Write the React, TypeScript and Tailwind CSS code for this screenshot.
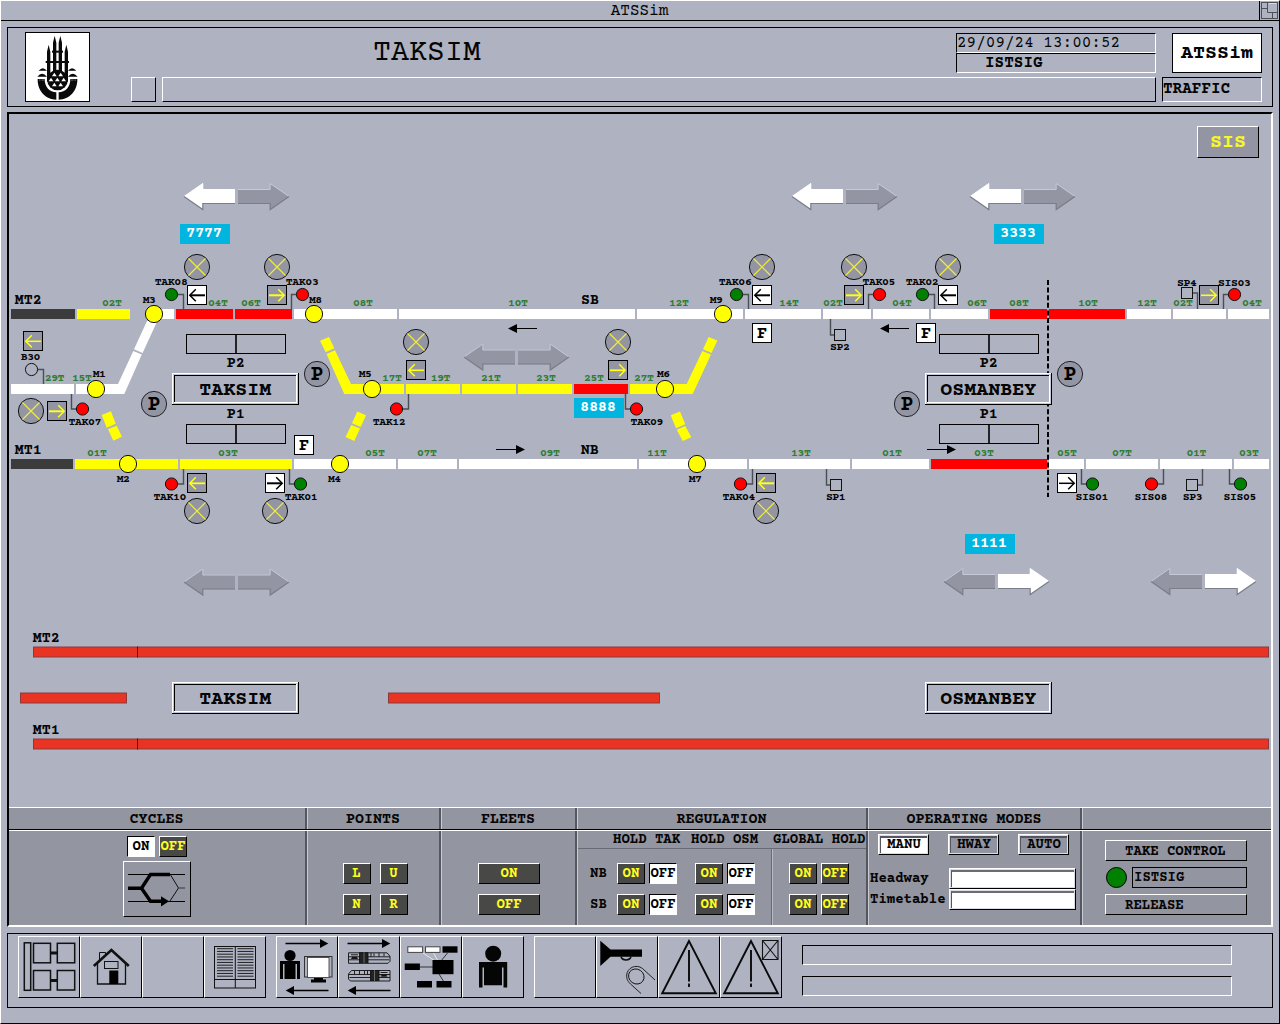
import React from "react";

type Dir = "L" | "R";

const RAISED = "border border-t-white border-l-white border-b-black border-r-black";
const SUNKEN = "border border-t-black border-l-black border-b-white border-r-white";

/* ---------- Track schematic data ---------- */

const WHITE = "#ffffff";
const YELLOW = "#ffff00";
const RED = "#ff0000";
const DARK = "#3b3b3b";
const GREY = "#9395a3";
const INK = "#050505";

const segments: [number, number, number, string][] = [
  [11, 75, 309, DARK], [77, 130, 309, YELLOW], [154, 174, 309, WHITE], [176, 233, 309, RED], [235, 292, 309, RED],
  [294, 397, 309, WHITE], [399, 635, 309, WHITE], [637, 743, 309, WHITE], [745, 821, 309, WHITE], [823, 871, 309, WHITE],
  [873, 929, 309, WHITE], [931, 988, 309, WHITE], [990, 1047, 309, RED], [1049, 1125, 309, RED], [1127, 1171, 309, WHITE],
  [1173, 1226, 309, WHITE], [1228, 1269, 309, WHITE],
  [11, 74, 384, WHITE], [406, 460, 384, YELLOW], [462, 516, 384, YELLOW], [518, 572, 384, YELLOW], [574, 628, 384, RED],
  [11, 73, 459, DARK], [75, 178, 459, YELLOW], [180, 292, 459, YELLOW], [294, 396, 459, WHITE], [398, 457, 459, WHITE],
  [459, 637, 459, WHITE], [639, 747, 459, WHITE], [749, 850, 459, WHITE], [852, 929, 459, WHITE], [931, 1047, 459, RED],
  [1049, 1084, 459, WHITE], [1086, 1158, 459, WHITE], [1160, 1232, 459, WHITE], [1234, 1269, 459, WHITE],
];

const slants: [string, string][] = [
  ["76,384 118,384 133.3,351 141.8,354.6 124.3,394 76,394", WHITE],
  ["134,349.2 147,321 157.3,321 142.6,353", WHITE],
  ["101.7,415 111,411.3 115.7,423.7 106.7,427.7", YELLOW],
  ["108,429.3 116.7,425.7 122,436.7 113.3,440.7", YELLOW],
  ["320,340.7 329,337 334.3,348.3 325.7,352.3", YELLOW],
  ["326.5,354 335,350.3 351,384 404,384 404,394 344.3,394", YELLOW],
  ["357.3,411.5 366,415.3 360.7,427 352,423.3", YELLOW],
  ["351.3,425 360,428.5 354.3,441 345.5,437", YELLOW],
  ["630,384 686.7,384 702.3,351 711,354.5 692.7,394 630,394", YELLOW],
  ["703,349.3 708.6,337 717.4,340.4 711.5,352.9", YELLOW],
  ["670.7,415.3 680,411.5 685.3,424.3 676,428.3", YELLOW],
  ["676.7,429.7 685.3,426 691.3,437.3 682.7,441", YELLOW],
];

const points: [number, number][] = [
  [154, 314], [314, 314], [723, 314], [96, 389], [372, 389], [665, 389], [128, 464], [340, 464], [697, 464],
];

/* centre x, centre y, fill, x of the post, y where the post meets the track */
const signals: [number, number, string, number, number][] = [
  [171.5, 294.5, "#008000", 183.5, 309], [302.5, 294.5, RED, 291.5, 309], [736.5, 294.5, "#008000", 748.5, 309],
  [879.5, 294.5, RED, 868.5, 309], [922.5, 294.5, "#008000", 934.5, 309], [1234.5, 294.5, RED, 1223.5, 309],
  [31.5, 369.5, "none", 43.5, 384], [82.5, 409, RED, 71.5, 394], [396.5, 409, RED, 408.5, 394],
  [636.5, 409, RED, 625.5, 394], [171.5, 484, RED, 183.5, 469], [300.5, 484, "#008000", 289.5, 469],
  [740.5, 484, RED, 752.5, 469], [1092.5, 484, "#008000", 1081.5, 469], [1151.5, 484, RED, 1163.5, 469],
  [1240.5, 484, "#008000", 1229.5, 469],
];

const squares: [number, number, number, number][] = [
  [1187, 293, 1197.5, 309], [840, 335, 830.5, 319], [836, 485, 826.5, 469], [1192, 485, 1202.5, 469],
];

const crosses: [number, number][] = [
  [197, 267], [277, 267], [762, 267], [854, 267], [948, 267], [416, 342], [618, 342], [31, 411],
  [197, 511], [275, 511], [766, 511],
];

const routeBoxes: [number, number, Dir, boolean, number][] = [
  [197, 295, "L", true, 2], [277, 295, "R", false, 2], [762, 295, "L", true, 2], [854, 295, "R", false, 2],
  [948, 295, "L", true, 2], [1209, 295, "R", false, 1.6], [33, 341, "L", false, 1.5], [57, 411, "R", false, 2],
  [416, 370, "L", false, 1.6], [618, 370, "R", false, 1.8], [197, 483, "L", false, 1.8], [275, 483, "R", true, 2],
  [766, 483, "L", false, 2], [1067, 483, "R", true, 1.5],
];

const trackLabels: [number, number, string][] = [
  [102.5, 306, "02T"], [208.5, 306, "04T"], [241.5, 306, "06T"], [353.5, 306, "08T"], [508.5, 306, "10T"], [669.5, 306, "12T"],
  [779.5, 306, "14T"], [823.5, 306, "02T"], [892.5, 306, "04T"], [967.5, 306, "06T"], [1009.5, 306, "08T"],
  [1078.5, 306, "10T"], [1137.5, 306, "12T"], [1173.5, 306, "02T"], [1242.5, 306, "04T"],
  [45.2, 381, "29T"], [72.5, 381, "15T"], [382.5, 381, "17T"], [431.2, 381, "19T"], [481.5, 381, "21T"],
  [536.5, 381, "23T"], [584.5, 381, "25T"], [634.5, 381, "27T"],
  [87.5, 456, "01T"], [218.5, 456, "03T"], [365.5, 456, "05T"], [417.5, 456, "07T"], [540.5, 456, "09T"],
  [647.5, 456, "11T"], [791.5, 456, "13T"], [882.5, 456, "01T"], [974.5, 456, "03T"], [1057.5, 456, "05T"],
  [1112.5, 456, "07T"], [1187, 456, "01T"], [1239.5, 456, "03T"],
];

const nameLabels: [number, number, string][] = [
  [155.3, 285, "TAK08"], [286.3, 285, "TAK03"], [719.3, 285, "TAK06"], [863, 285, "TAK05"], [906.2, 285, "TAK02"],
  [1177.5, 285.5, "SP4"], [1218.5, 285.5, "SIS03"], [143.2, 303, "M3"], [309.5, 303, "M8"], [710.2, 303, "M9"],
  [21.2, 360, "B30"], [93.2, 377, "M1"], [359.2, 377, "M5"], [657.5, 377, "M6"], [69, 425, "TAK07"],
  [373.2, 425, "TAK12"], [631, 425, "TAK09"], [830.5, 350, "SP2"], [117.2, 482, "M2"], [328.4, 482, "M4"],
  [689.2, 482, "M7"], [154, 500, "TAK10"], [285.2, 500, "TAK01"], [723, 500, "TAK04"], [826.4, 500, "SP1"],
  [1076, 500, "SIS01"], [1135, 500, "SIS08"], [1183.3, 500, "SP3"], [1224, 500, "SIS05"],
];

const lineLabels: [number, number, string][] = [
  [15, 304, "MT2"], [15, 454, "MT1"], [581.3, 304, "SB"], [581, 454, "NB"], [33, 642, "MT2"], [33, 734, "MT1"],
  [227, 367, "P2"], [227, 418, "P1"], [980, 367, "P2"], [980, 418, "P1"],
];

const trainTags: [number, number, string][] = [
  [180, 224, "7777"], [574, 398, "8888"], [994, 224, "3333"], [965, 534, "1111"],
];

const directionPairs: [number, number, boolean, boolean][] = [
  [184, 196.5, true, false], [792, 196.5, true, false], [970, 196.5, true, false], [464, 357, false, false],
  [184, 582, false, false], [944, 581.5, false, true], [1151, 581.5, false, true],
];

const flowArrows: [number, number, Dir][] = [
  [508, 328.5, "L"], [880, 328.5, "L"], [496, 449.5, "R"], [927, 449.5, "R"],
];

/* ---------- Schematic pieces ---------- */

function BlockArrow({ x, y, flip, on }: { x: number; y: number; flip?: boolean; on: boolean }) {
  return (
    <g transform={flip ? `translate(${x} ${y}) scale(-1 1)` : `translate(${x} ${y})`}>
      <polygon points="0,0 19,-13.2 19,-7.2 51,-7.2 51,7.2 19,7.2 19,13.2" fill={on ? WHITE : GREY} />
      <path d="M0 0L18.8 -13V-7H51" fill="none" stroke={on ? "#ffffff" : "#c6c9d8"} strokeWidth="1" />
      <path d="M0 0L18.8 13V7H51" fill="none" stroke="#7b7d89" strokeWidth="1.2" />
    </g>
  );
}

function StationBox({ x, y, name }: { x: number; y: number; name: string }) {
  return (
    <g>
      <rect x={x} y={y} width="127" height="32" fill="#000" />
      <rect x={x} y={y} width="126" height="31" fill="#fff" />
      <rect x={x + 1} y={y + 1} width="125" height="30" fill="#c3c6d4" />
      <rect x={x + 2} y={y + 2} width="123" height="28" fill="#fff" />
      <rect x={x + 2} y={y + 2} width="122" height="27" fill="#000" />
      <rect x={x + 3} y={y + 3} width="121" height="26" fill="#aeb2c1" />
      <text x={x + 63.3} y={y + 22} textAnchor="middle" className="text-[20px] font-bold" fill={INK}>{name}</text>
    </g>
  );
}

function RedLine({ x1, x2, y, split }: { x1: number; x2: number; y: number; split?: number }) {
  return (
    <g>
      <rect x={x1 + 0.5} y={y + 0.5} width={x2 - x1 - 1} height="10" fill="#e93323" stroke="#8b3a3c" />
      {split && <line x1={split} x2={split} y1={y} y2={y + 11} stroke="#4a1512" strokeWidth="1" />}
    </g>
  );
}

function Schematic() {
  return (
    <svg viewBox="9 114 1262 693" className="block h-[693px] w-[1262px]" aria-label="Track schematic">
      {directionPairs.map(([x, y, l, r]) => (
        <g key={`${x}-${y}`}>
          <BlockArrow x={x} y={y} on={l} />
          <BlockArrow x={x + 105} y={y} on={r} flip />
        </g>
      ))}
      {segments.map(([a, b, y, c]) => (
        <rect key={`${a}-${y}`} x={a} y={y} width={b - a} height="10" fill={c} />
      ))}
      {slants.map(([p, c]) => <polygon key={p} points={p} fill={c} />)}
      {flowArrows.map(([x, y, d]) => (
        <g key={`${x}-${y}`} transform={d === "L" ? `translate(${x} ${y})` : `translate(${x + 29} ${y}) scale(-1 1)`}>
          <line x1="7" x2="29" y1="0" y2="0" stroke="#000" />
          <polygon points="0,0 9,-4.5 9,4.5" fill="#000" />
        </g>
      ))}
      {signals.map(([x, y, c, px, ty]) => (
        <g key={`${x}-${y}`}>
          <path d={`M${x + (px > x ? 6 : -6)} ${y}H${px}V${ty}`} fill="none" stroke="#4c4e56" strokeWidth="1.4" />
          <circle cx={x} cy={y} r="6.1" fill={c} stroke="#111" />
        </g>
      ))}
      {squares.map(([x, y, px, ty]) => (
        <g key={`${x}-${y}`} fill="none">
          <path d={`M${x + (px > x ? 6 : -6)} ${y}H${px}V${ty}`} stroke="#4c4e56" strokeWidth="1.4" />
          <rect x={x - 5.5} y={y - 5.5} width="11" height="11" stroke="#111" />
        </g>
      ))}
      {points.map(([x, y]) => <circle key={`${x}-${y}`} cx={x} cy={y} r="8.6" fill={YELLOW} stroke="#111" />)}
      {crosses.map(([x, y]) => (
        <g key={`${x}-${y}`}>
          <circle cx={x} cy={y} r="12.6" fill={GREY} stroke="#111" />
          <path d={`M${x - 8.5} ${y - 8.5}l17 17m0 -17l-17 17`} stroke="#f2ee3c" strokeWidth="1.1" />
        </g>
      ))}
      {routeBoxes.map(([x, y, d, on, w]) => (
        <g key={`${x}-${y}`} transform={`translate(${x} ${y})`}>
          <rect x="-9.5" y="-9.5" width="19" height="19" fill={on ? WHITE : GREY} stroke="#000" />
          <g transform={d === "R" ? "scale(-1 1)" : undefined} fill="none" stroke={on ? "#000" : "#ffff1a"} strokeWidth={w}>
            <path d="M-7 0.3H8" />
            <path d="M-1.2 -5.7L-7.2 0.3L-1.2 6.3" strokeWidth="1.5" />
          </g>
        </g>
      ))}
      {[[304, 445], [762, 333], [926, 333]].map(([x, y]) => (
        <g key={x}>
          <rect x={x - 9.5} y={y - 9.5} width="19" height="19" fill="#fff" stroke="#000" />
          <text x={x} y={y + 5} textAnchor="middle" className="text-[17px] font-bold">F</text>
        </g>
      ))}
      {[[317, 374], [154, 404], [907, 404], [1070, 374]].map(([x, y]) => (
        <g key={x}>
          <circle cx={x} cy={y} r="12.6" fill={GREY} stroke="#22242a" />
          <text x={x} y={y + 6} textAnchor="middle" className="text-[21px] font-bold">P</text>
        </g>
      ))}
      {[[186, 334], [186, 424], [939, 334], [939, 424]].map(([x, y]) => (
        <g key={`${x}-${y}`} fill="none" stroke="#000">
          <rect x={x + 0.5} y={y + 0.5} width="99" height="19" />
          <line x1={x + 50} x2={x + 50} y1={y} y2={y + 20} strokeWidth="1.6" />
        </g>
      ))}
      <line x1="1048" x2="1048" y1="280" y2="497" stroke="#000" strokeWidth="2" strokeDasharray="5 2.6" />
      <StationBox x={172} y={373} name="TAKSIM" />
      <StationBox x={925} y={373} name="OSMANBEY" />
      <StationBox x={172} y={682} name="TAKSIM" />
      <StationBox x={925} y={682} name="OSMANBEY" />
      <RedLine x1={33} x2={1269} y={646.5} split={137.5} />
      <RedLine x1={20} x2={127} y={692.5} />
      <RedLine x1={388} x2={660} y={692.5} />
      <RedLine x1={33} x2={1269} y={738.5} split={137.5} />
      {trackLabels.map(([x, y, t]) => (
        <text key={`${x}-${y}`} x={x - 0.5} y={y} textLength="19.8" className="text-[11.5px] font-bold" fill="#2f7d32">{t}</text>
      ))}
      {nameLabels.map(([x, y, t]) => (
        <text key={`${x}-${y}`} x={x - 0.5} y={y} textLength={t.length * 6.6} className="text-[11.5px] font-bold" fill={INK}>{t}</text>
      ))}
      {lineLabels.map(([x, y, t]) => (
        <text key={`${x}-${y}`} x={x - 0.3} y={y} className="text-[15px] font-bold" fill={INK}>{t}</text>
      ))}
      {trainTags.map(([x, y, t]) => (
        <g key={t}>
          <rect x={x} y={y} width="50" height="20" fill="#00b5e0" />
          <text x={x + 6} y={y + 13} textLength="36" className="text-[15.5px] font-bold" fill="#fff">{t}</text>
        </g>
      ))}
    </svg>
  );
}

/* ---------- Header ---------- */

function Emblem() {
  const tris: [number, number][] = [
    [163, 224], [182, 224], [153, 239], [172, 239], [191, 239], [163, 254], [182, 254],
  ];
  return (
    <svg viewBox="78 99 189 204" className="h-[68px] w-[63px]">
      <g fill="#0a0a0a">
        <path d="M141 245V155L146 134L151 155V245zM159 220V128L164 107L169 128V220zM176 220V128L181 107L186 128V220zM194 245V155L199 134L204 155V245z" />
        <rect x="156" y="152" width="33" height="6" />
        <rect x="137" y="183" width="70" height="6" />
        <path d="M116 212q12-15 25 0zM112 230q14-17 29 0zM204 212q12-15 25 0zM204 230q14-17 29 0z" />
        <circle cx="172.500" cy="240" r="31" />
        <path d="M113 237H134C134 262 149 276 169 277V299C137 299 112 272 113 237zM232 237H211C211 262 196 276 176 277V299C208 299 233 272 232 237z" />
      </g>
      <path d="M118 240h14M213 240h14" stroke="#fff" strokeWidth="2" strokeDasharray="2 2" />
      {tris.map(([x, y]) => (
        <path key={`${x}-${y}`} d={`M${x} ${y - 6}l7 11h-14z`} fill="#fff" />
      ))}
    </svg>
  );
}

function Header() {
  return (
    <header className="mx-[7px] mt-[6px] flex h-[80px] border border-black pl-[17px] pt-[4px]">
      <div className="flex h-[70px] w-[65px] items-center justify-center border border-black bg-white">
        <Emblem />
      </div>
      <div className="ml-[41px] mt-px flex w-[1025px] flex-col gap-1">
        <div className="flex h-10 justify-between">
          <h1 className="pl-[242px] pt-[3px] text-[30px] leading-9">TAKSIM</h1>
          <div className="w-[200px]">
            <div className={`h-5 text-base leading-[19px] whitespace-pre ${SUNKEN}`}>29/09/24 13:00:52</div>
            <div className={`h-5 pl-[28px] text-base font-bold leading-[19px] ${SUNKEN}`}>ISTSIG</div>
          </div>
        </div>
        <div className="flex gap-[6px]">
          <div className={`size-[25px] ${RAISED}`} />
          <div className={`h-[25px] flex-1 ${RAISED}`} />
        </div>
      </div>
      <div className="ml-[6px] mt-px flex w-[100px] flex-col items-end gap-1">
        <div className="flex h-10 w-[90px] items-center justify-center border border-black bg-white pt-0.5 text-xl font-bold">ATSSim</div>
        <div className={`h-[25px] w-full text-base font-bold leading-[23px] ${SUNKEN}`}>TRAFFIC</div>
      </div>
    </header>
  );
}

/* ---------- Control panel ---------- */

function Btn({ children, on, className = "w-7" }: { children: React.ReactNode; on?: boolean; className?: string }) {
  return (
    <button
      className={`flex h-[21px] items-center justify-center whitespace-nowrap text-sm font-bold leading-none ${className} ${
        on ? `bg-white text-black ${SUNKEN}` : `bg-[#484846] text-[#ffff1a] ${RAISED}`
      }`}
    >
      {children}
    </button>
  );
}

function Panel({ title, className, children, last }: { title?: string; className: string; children: React.ReactNode; last?: boolean }) {
  return (
    <section
      className={`flex h-full flex-col border-l border-l-[#c9cbd4] first:border-l-0 ${last ? "" : "border-r-2 border-r-[#55575f]"} ${className}`}
    >
      <h2 className="flex h-[21px] items-center justify-center pt-px pr-px text-[15px] font-bold leading-none">{title}</h2>
      <div className="-mx-[3px] h-px bg-black" />
      <div className="-mx-[3px] h-px bg-white" />
      <div className="flex-1">{children}</div>
    </section>
  );
}

function RegRow({ label }: { label: string }) {
  return (
    <div className="flex h-[21px] items-center">
      <span className="w-[27px] text-sm font-bold leading-none">{label}</span>
      <Btn>ON</Btn>
      <Btn on className="ml-1 w-7">OFF</Btn>
      <Btn className="ml-[18px] w-7">ON</Btn>
      <Btn on className="ml-1 w-7">OFF</Btn>
      <Btn className="ml-[34px] w-7">ON</Btn>
      <Btn className="ml-1 w-7">OFF</Btn>
    </div>
  );
}

function ModeBtn({ children, on }: { children: string; on?: boolean }) {
  return (
    <button className="h-[21px] w-[51px] border border-t-white border-l-white border-b-black border-r-black bg-[#dcdde4] p-px">
      <span
        className={`flex h-full items-center justify-center border-t-2 border-l border-t-[#55565f] border-l-[#55565f] pb-px text-sm font-bold leading-none ${
          on ? "bg-white" : "bg-[#9294a1]"
        }`}
      >
        {children}
      </span>
    </button>
  );
}

function Field() {
  return (
    <div className="h-[21px] w-[127px] border border-t-white border-l-white border-b-black border-r-black bg-[#dcdde4] p-px">
      <div className="h-full border-t-2 border-l border-t-[#6a6b75] border-l-[#55565f] bg-white" />
    </div>
  );
}

function Controls() {
  return (
    <div className="flex h-[118px] overflow-hidden border-t border-white bg-[#9395a1]">
      <Panel title="CYCLES" className="w-[298px]">
        <div className="flex flex-col items-center pt-[5px] pr-px">
          <div className="ml-[1px] flex gap-1">
            <Btn on>ON</Btn>
            <Btn>OFF</Btn>
          </div>
          <div className={`mt-[4px] h-[56px] w-[68px] ${RAISED}`}>
            <svg viewBox="1 1 66 54" className="h-[54px] w-[66px]" fill="none" stroke="#000">
              <path d="M5 13.500H62M5 40.500H62" />
              <path d="M47 13L55.500 27L47 40" strokeWidth="0.900" />
              <path d="M55.500 27H62" stroke="#44464e" strokeWidth="1.200" />
              <path d="M5 27.200H18.500L27.500 13.500H47M18.500 27.200L27.500 40.300H40" strokeWidth="3.400" />
              <polygon points="38,35.300 46,40.300 38,45.500" fill="#000" stroke="none" />
            </svg>
          </div>
        </div>
      </Panel>
      <Panel title="POINTS" className="w-[134px]">
        <div className="grid grid-cols-[28px_28px] justify-center gap-x-[9px] gap-y-[10px] pt-8 pl-[3px]">
          <Btn>L</Btn>
          <Btn>U</Btn>
          <Btn>N</Btn>
          <Btn>R</Btn>
        </div>
      </Panel>
      <Panel title="FLEETS" className="w-[136px]">
        <div className="flex flex-col items-center gap-[10px] pt-8 pl-px">
          <Btn className="w-[62px]">ON</Btn>
          <Btn className="w-[62px]">OFF</Btn>
        </div>
      </Panel>
      <Panel title="REGULATION" className="w-[291px]">
        <div className="flex h-full flex-col">
          <div className="flex h-[18px] items-center border-b border-[#686a74] pl-[35px] pt-px text-sm font-bold leading-none whitespace-nowrap">
            <span className="w-[78px]">HOLD TAK</span>
            <span className="w-[82px]">HOLD OSM</span>
            <span>GLOBAL HOLD</span>
          </div>
          <div className="relative flex flex-1 flex-col gap-[10px] pl-[12px] pt-[14px]">
            <RegRow label="NB" />
            <RegRow label="SB" />
            <div className="absolute inset-y-0 left-[193px] w-0.5 border-l border-r border-l-[#686a74] border-r-[#b9bbc6]" />
          </div>
        </div>
      </Panel>
      <Panel title="OPERATING MODES" className="w-[214px]">
        <div className="flex gap-[19px] pl-[9px] pt-[3px]">
          <ModeBtn on>MANU</ModeBtn>
          <ModeBtn>HWAY</ModeBtn>
          <ModeBtn>AUTO</ModeBtn>
        </div>
        <div className="mt-[13px] pl-px text-sm font-bold">
          {["Headway", "Timetable"].map((t) => (
            <div key={t} className="flex h-[21px] items-center">
              <span className="w-[79px] leading-none">{t}</span>
              <Field />
            </div>
          ))}
        </div>
      </Panel>
      <Panel className="w-[189px]" last>
        <div className="ml-[22px] flex w-[142px] flex-col pt-[9px] text-sm font-bold">
          <button className={`flex h-[21px] items-center pl-[19px] pt-0.5 leading-none ${RAISED}`}>TAKE CONTROL</button>
          <div className="mt-[6px] flex h-[21px] gap-[5px] pl-px">
            <span className="size-[21px] rounded-full border border-black bg-[#008000]" />
            <div className="flex h-[21px] flex-1 items-center border border-black pl-px leading-none">ISTSIG</div>
          </div>
          <button className={`mt-[6px] flex h-[21px] items-center pl-[19px] pt-0.5 leading-none ${RAISED}`}>RELEASE</button>
        </div>
      </Panel>
    </div>
  );
}

/* ---------- Toolbar icons (62 x 62 grid) ---------- */

function LongArrow({ y, left }: { y: number; left?: boolean }) {
  return (
    <g transform={left ? `translate(62 ${y}) scale(-1 1)` : `translate(0 ${y})`}>
      <line x1="9.500" x2="46" y1="0" y2="0" stroke="#000" strokeWidth="1.300" />
      <polygon points="44,-4.600 52.300,0 44,4.600" fill="#000" />
    </g>
  );
}

function Train({ y, flip }: { y: number; flip?: boolean }) {
  return (
    <g transform={flip ? `translate(62.500 ${y}) scale(-1 1)` : `translate(0 ${y})`} stroke="#111" strokeWidth="0.900" fill="none">
      <path d="M10.500 .5H49L52 4L52 9L50 11H10.500z" />
      <path d="M10.500 4.500H52M10.500 7.500H22M30 7.500H51M13 2.500H20M13 6H20M33 .5V4.500M41 .5V4.500M36 1V4M46 1V4" />
      <path d="M14 5.500h5" strokeWidth="2" />
      <rect x="21.500" y="0.500" width="8.500" height="10" fill="#222" />
      <path d="M26 0v11" stroke="#888" strokeWidth="0.700" />
    </g>
  );
}

function Warning() {
  return (
    <g fill="none" stroke="#0a0a0a">
      <path d="M31 5L4.200 57.300H57.800z" strokeWidth="1.900" />
      <path d="M31 14V45.500M31 47.500V51" strokeWidth="1.900" />
    </g>
  );
}

const rows = Array.from({ length: 11 }, (_, i) => 12.7 + i * 2.75);

const icons: Record<string, React.ReactNode> = {
  layout: (
    <g fill="none" stroke="#111" strokeWidth="1.500">
      <rect x="6.300" y="6.800" width="6.400" height="47.500" />
      <rect x="15.500" y="7.300" width="17" height="19.500" />
      <rect x="39.300" y="7.300" width="17.400" height="19.500" />
      <rect x="15.500" y="34.500" width="17" height="19.500" />
      <rect x="39.300" y="34.500" width="17.400" height="19.500" />
      <path d="M32.500 17H39.300M32.500 44.500H39.300" strokeWidth="3" />
    </g>
  ),
  home: (
    <g fill="none" stroke="#111">
      <path d="M19.500 26V16.500H25.500V20" />
      <path d="M17.500 26V48H45.500V26" strokeWidth="1.300" />
      <path d="M13.800 30L31.400 14L48.800 30" strokeWidth="2.600" />
      <rect x="24.500" y="25.500" width="13.500" height="7" />
      <rect x="29.300" y="34.500" width="9" height="13.500" fill="#000" stroke="none" />
    </g>
  ),
  log: (
    <g fill="none" stroke="#111">
      <rect x="10.500" y="10.500" width="41" height="41.500" />
      <path d="M31.300 10V52M10.500 43.500H51.500" />
      {rows.map((y) => <path key={y} d={`M13 ${y}H29M33.500 ${y}H49.500`} strokeWidth="0.900" />)}
    </g>
  ),
  operator: (
    <g>
      <LongArrow y={7.5} />
      <LongArrow y={54.5} left />
      <circle cx="14" cy="19.500" r="5.600" />
      <path d="M4 43V25H24V43H21V28H19.500V43H8.500V28H7V43z" />
      <rect x="28.500" y="20.500" width="27.500" height="20.500" fill="#aeb2c1" stroke="#333" />
      <rect x="31.500" y="21.500" width="21.500" height="20" fill="#fff" stroke="#333" strokeWidth="0.800" />
      <path d="M38 42H47V43.500H50V46.500H35V43.500H38z" />
    </g>
  ),
  trains: (
    <g>
      <LongArrow y={7.5} />
      <Train y={16.3} />
      <Train y={34} flip />
      <LongArrow y={54.5} left />
    </g>
  ),
  network: (
    <g>
      <path d="M23 17L35 25M33.500 17L38 25" stroke="#e6e7ee" strokeWidth="1" />
      <path d="M47.500 17L41 25M20 31H33M39 38L44 46" stroke="#33353c" strokeWidth="1" />
      <rect x="7.800" y="10.800" width="14.800" height="5.600" fill="#fff" stroke="#444" />
      <rect x="25.500" y="10.800" width="14.500" height="5.600" fill="#fff" stroke="#444" />
      <rect x="42.500" y="10.300" width="15" height="6.400" />
      <rect x="32.500" y="24" width="21" height="14.200" />
      <rect x="4.700" y="27.500" width="15.200" height="6.500" />
      <rect x="17" y="45" width="15" height="6.500" />
      <rect x="36.500" y="45" width="15" height="6.500" />
    </g>
  ),
  person: (
    <g fill="#050505">
      <circle cx="31.200" cy="17.700" r="8" />
      <path d="M17 51.500V26H45.200V51.500H41.500V31.500H40V49.300H22V31.500H20.500V51.500z" />
    </g>
  ),
  horn: (
    <g fill="none" stroke="#111">
      <path d="M4.300 4.700L14.500 13.500H46V20.700H14.500L4.300 30z" fill="#000" stroke="none" />
      <path d="M25 20.500C26 25 34 25 35 20.500" strokeWidth="1.500" />
      <ellipse cx="40.300" cy="40.500" rx="8" ry="7.300" transform="rotate(35 40.300 40.500)" strokeWidth="0.900" />
      <path d="M59 44L46.500 32.500C40 27.500 31 32 30.700 39C30.500 44 32.500 46 34.500 48L45 57.500" strokeWidth="0.900" />
    </g>
  ),
  alarm: <Warning />,
  alarmOff: (
    <g>
      <Warning />
      <path d="M42.500 4.500H58V23.500H42.500zM42.500 4.500L58 23.500M58 4.500L42.500 23.500" fill="none" stroke="#111" strokeWidth="1.100" />
    </g>
  ),
};

const toolGroups: string[][] = [
  ["layout", "home", "", "log"],
  ["operator", "trains", "network", "person"],
  ["", "horn", "alarm", "alarmOff"],
];

function Toolbar() {
  return (
    <footer className="mx-[7px] mt-[6px] flex h-[75px] gap-[10px] border border-black pl-[10px] pt-[2px]">
      {toolGroups.map((g, i) => (
        <div key={i} className="flex">
          {g.map((name, j) => (
            <button key={j} className={`size-[62px] ${RAISED}`}>
              {name && <svg viewBox="1 1 60 60" className="size-[60px]">{icons[name]}</svg>}
            </button>
          ))}
        </div>
      ))}
      <div className="ml-[10px] mt-[9px] flex flex-col gap-[11px]">
        <div className={`h-5 w-[430px] ${SUNKEN}`} />
        <div className={`h-5 w-[430px] ${SUNKEN}`} />
      </div>
    </footer>
  );
}

export default function App() {
  return (
    <div className="h-[1024px] w-[1280px] overflow-hidden border border-t-white border-l-white border-b-black border-r-black bg-[#aeb2c1] font-['Courier_Prime','Nimbus_Mono_PS','FreeMono','Courier_New','Liberation_Mono',monospace] text-[#050505]">
      <div className="-m-px flex h-[1024px] w-[1280px] flex-col">
        <div className="flex h-[21px] shrink-0 border-b border-black pt-px">
          <div className="flex-1 pl-[20px] text-center text-base leading-[20px]">ATSSim</div>
          <div className="w-[21px] border-l border-black p-px">
            <svg viewBox="0 0 18 18" className="size-[18px]" fill="none" stroke="#4e5058">
              <rect x="0.500" y="0.500" width="16" height="16" />
              <path d="M6.500 .5V10.500H16.500M.5 6.500H6.500M11.500 10.500V16.500" />
              <path d="M7.500 1.500H15.500" stroke="#d8dae4" />
            </svg>
          </div>
        </div>
        <Header />
        <main className="relative mx-[7px] mt-[5px] h-[815px] shrink-0 border-2 border-t-black border-l-black border-b-white border-r-white">
          <Schematic />
          <button className={`absolute right-[12px] top-[12px] flex h-8 w-[62px] items-center justify-center bg-[#9395a3] pt-0.5 text-xl font-bold text-[#f7f72a] ${RAISED}`}>
            SIS
          </button>
          <Controls />
        </main>
        <Toolbar />
      </div>
    </div>
  );
}
